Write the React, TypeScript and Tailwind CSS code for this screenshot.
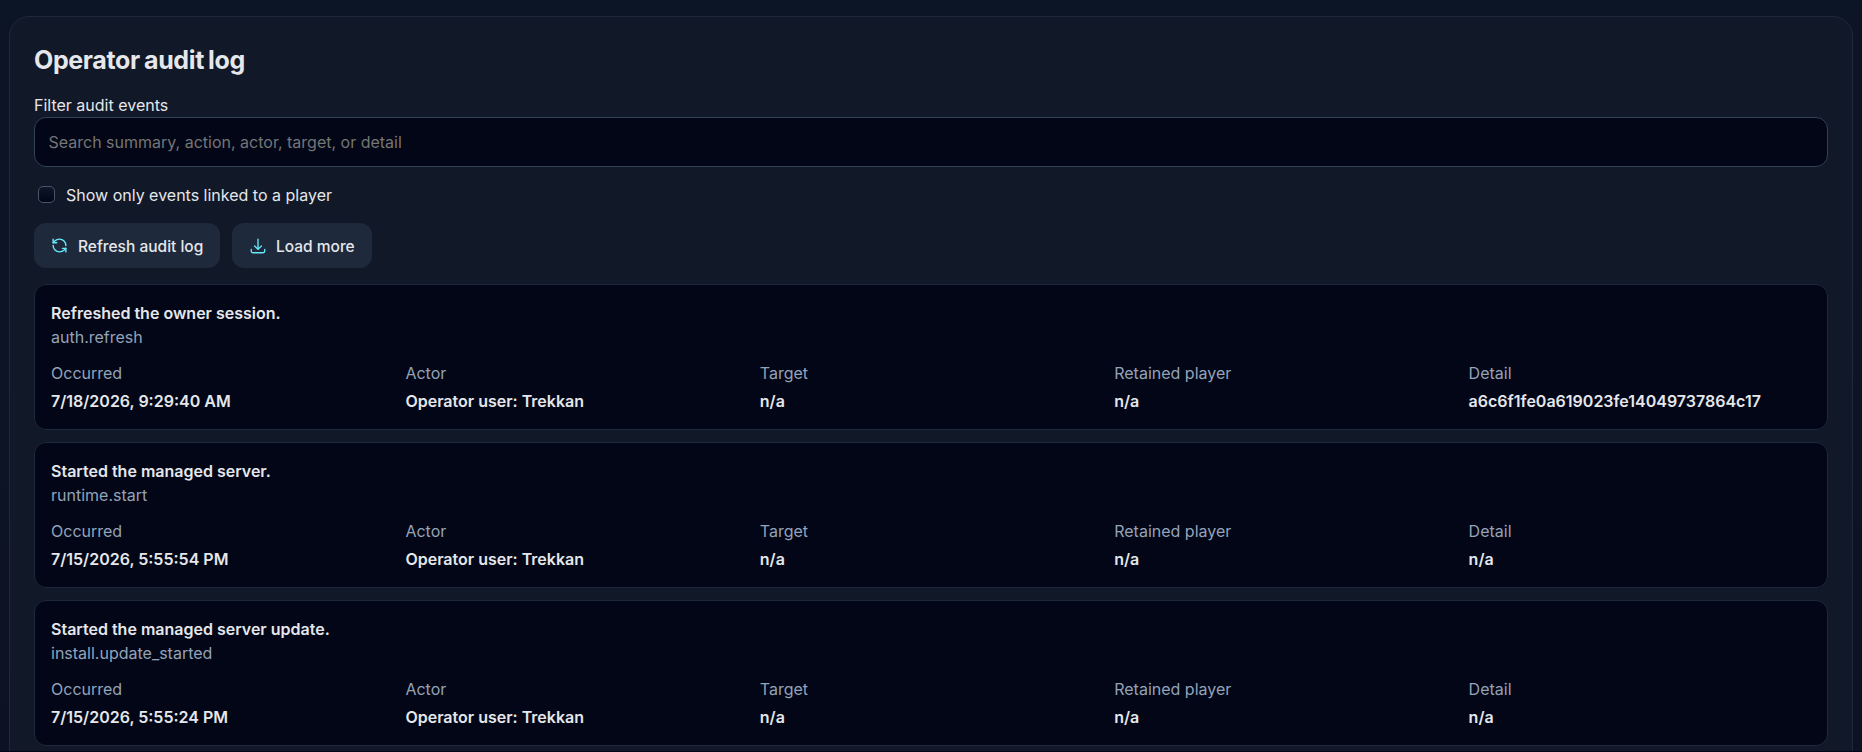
import React, { useState } from 'react'
import { RefreshCcw } from 'lucide-react'
import { HiOutlineArrowDownTray } from 'react-icons/hi2'

interface AuditEvent {
    summary: string
    action: string
    occurred: string
    actor: string
    target: string
    player: string
    detail: string
}

const events: AuditEvent[] = [
    {
        summary: 'Refreshed the owner session.',
        action: 'auth.refresh',
        occurred: '7/18/2026, 9:29:40 AM',
        actor: 'Operator user: Trekkan',
        target: 'n/a',
        player: 'n/a',
        detail: 'a6c6f1fe0a619023fe14049737864c17',
    },
    {
        summary: 'Started the managed server.',
        action: 'runtime.start',
        occurred: '7/15/2026, 5:55:54 PM',
        actor: 'Operator user: Trekkan',
        target: 'n/a',
        player: 'n/a',
        detail: 'n/a',
    },
    {
        summary: 'Started the managed server update.',
        action: 'install.update_started',
        occurred: '7/15/2026, 5:55:24 PM',
        actor: 'Operator user: Trekkan',
        target: 'n/a',
        player: 'n/a',
        detail: 'n/a',
    },
]

const Field: React.FC<{ label: string, value: string }> = ({ label, value }) => (
    <div className="flex flex-col gap-1 min-w-0">
        <dt className="text-[#94a3b8]">{label}</dt>
        <dd className="font-semibold">{value}</dd>
    </div>
)

const EventCard: React.FC<{ event: AuditEvent }> = ({ event }) => (
    <article className="rounded-xl border border-[#1e293b] bg-[#020617] p-4">
        <h3 className="font-semibold">{event.summary}</h3>
        <p className="text-[#94a3b8]">{event.action}</p>
        <dl className="mt-3 grid grid-cols-5 gap-3">
            <Field label="Occurred" value={event.occurred} />
            <Field label="Actor" value={event.actor} />
            <Field label="Target" value={event.target} />
            <Field label="Retained player" value={event.player} />
            <Field label="Detail" value={event.detail} />
        </dl>
    </article>
)

export default function App() {
    const [query, setQuery] = useState('')
    const [linkedOnly, setLinkedOnly] = useState(false)

    return (
        <div className="h-screen overflow-hidden border-b border-[#020617] bg-linear-to-b from-[#0c1526] to-[#0c1224] px-[9px] pt-4 font-['Inter',sans-serif] text-base text-[#e5e7eb]">
            <section className="h-[900px] rounded-[20px] border border-[#1e293b] bg-[#111827] px-6 pt-6">
                <h2 className="h-[38px] text-[25px] leading-[38px] font-bold tracking-[-0.35px] [word-spacing:-1.5px]">Operator audit log</h2>

                <label className="mt-[14px] block">
                    Filter audit events
                    <input
                        type="text"
                        value={query}
                        onChange={(e) => setQuery(e.target.value)}
                        placeholder="Search summary, action, actor, target, or detail"
                        className="block h-[50px] w-full rounded-xl border border-[#334155] bg-[#020617] px-[13.5px] placeholder:text-[#757575] outline-none"
                    />
                </label>

                <label className="mt-4 flex items-center gap-[11px] pl-1">
                    <input
                        type="checkbox"
                        checked={linkedOnly}
                        onChange={(e) => setLinkedOnly(e.target.checked)}
                        className="-mt-px h-[17px] w-[17px] appearance-none rounded-[5px] border border-[#475569] bg-linear-to-b from-[#0f172a] to-[#020617] checked:bg-cyan-300"
                    />
                    Show only events linked to a player
                </label>

                <div className="mt-4 flex gap-3">
                    <button className="flex h-[45px] w-[186px] items-center gap-[9px] rounded-xl bg-[#1e293b] pl-[17px] text-[15.5px] font-medium whitespace-nowrap cursor-pointer">
                        <RefreshCcw size={17} className="mr-px shrink-0 text-[#67e8f9]" strokeWidth={2} />
                        <span className="pt-0.5">Refresh audit log</span>
                    </button>
                    <button className="flex h-[45px] w-[140px] items-center gap-[9px] rounded-xl bg-[#1e293b] pl-[17px] text-[15.5px] font-medium whitespace-nowrap cursor-pointer">
                        <HiOutlineArrowDownTray size={18} className="shrink-0 text-[#67e8f9]" strokeWidth={1.8} />
                        <span className="pt-0.5">Load more</span>
                    </button>
                </div>

                <div className="mt-4 flex flex-col gap-3">
                    {events.map((event) => (
                        <EventCard key={event.occurred} event={event} />
                    ))}
                </div>
            </section>
        </div>
    )
}
